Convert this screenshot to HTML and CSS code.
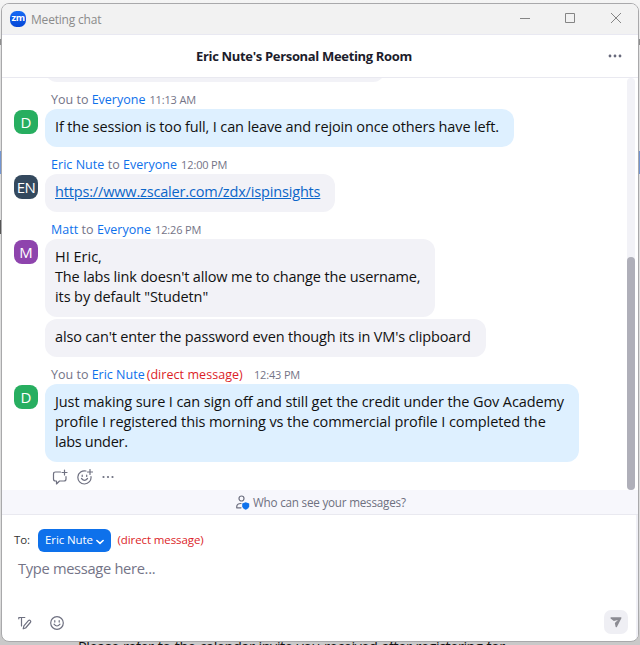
FILE: index.html
```
<!DOCTYPE html>
<html lang="en">
<head>
<meta charset="utf-8">
<title>Meeting chat</title>
<link rel="stylesheet" href="styles.css">
</head>
<body>
<div class="backdrop"><span>Please refer to the calendar invite you received after registering for</span></div>
<main class="window">
  <header class="titlebar">
    <span class="logo">zm</span>
    <span class="app-title">Meeting chat</span>
    <svg class="controls" width="104" height="12" viewBox="0 0 104 12"><path d="M0 6.500h10M45.500 1.500h9v9h-9zM91 1l10 10M101 1l-10 10"/></svg>
  </header>
  <div class="room"><h1>Eric Nute's Personal Meeting Room</h1>
    <svg class="more" width="14" height="4" viewBox="0 0 14 4"><circle cx="2" cy="2" r="1.400"/><circle cx="7" cy="2" r="1.400"/><circle cx="12" cy="2" r="1.400"/></svg>
  </div>
  <section class="messages">
    <div class="list">
      <div class="bubble previous"></div>
      <div class="meta"><span>You to <b>Everyone</b></span><time>11:13 AM</time></div>
      <article class="row"><span class="avatar green">D</span><p class="bubble own"><span class="snug">If the session is too full, I can leave and rejoin once others have left.</span></p></article>
      <div class="meta"><span class="roomy"><b>Eric Nute</b> to <b>Everyone</b></span><time class="near">12:00 PM</time></div>
      <article class="row"><span class="avatar navy">EN</span><p class="bubble"><a class="tight">https://www.zscaler.com/zdx/ispinsights</a></p></article>
      <div class="meta"><span class="roomy"><b>Matt</b> to <b>Everyone</b></span><time class="near">12:26 PM</time></div>
      <article class="row"><span class="avatar purple">M</span><div class="stack">
        <p class="bubble">HI Eric,<br><span class="tight">The labs link doesn't allow me to change the username,</span><br><span class="loose">its by default "Studetn"</span></p>
        <p class="bubble"><span class="tight">also can't enter the password even though its in VM's clipboard</span></p></div></article>
      <div class="meta"><span>You to <b>Eric Nute</b></span><span class="direct">(direct message)</span><time class="late">12:43 PM</time></div>
      <article class="row"><span class="avatar green">D</span><p class="bubble own"><span class="loose">Just making sure I can sign off and still get the credit under the Gov Academy</span><br><span class="loosest">profile I registered this morning vs the commercial profile I completed the</span><br><span class="tightest">labs under.</span></p></article>
      <div class="actions">
        <svg width="16" height="16" viewBox="0 0 16 16"><path d="M8.500 3H3.500Q1.500 3 1.500 5v5Q1.500 12 3.500 12h1v3l3-3h4.500q2 0 2-2V7.500M12.500 1v5M10 3.500h5"/></svg>
        <svg width="16" height="16" viewBox="0 0 16 16"><path d="M9 2A6.600 6.600 0 1 0 14 7.500M13 .500v5M10.500 3h5M4.500 9.500q3 3.600 6 0"/><path d="M5.200 6v1.500M9.700 6v1.500"/></svg>
        <svg class="dots" width="12" height="4" viewBox="0 0 12 4"><circle cx="1.500" cy="2" r="1.100"/><circle cx="6" cy="2" r="1.100"/><circle cx="10.500" cy="2" r="1.100"/></svg>
      </div>
    </div>
    <div class="track"><div class="thumb"></div></div>
  </section>
  <div class="notice">
    <svg width="14" height="15" viewBox="0 0 14 15"><circle cx="5.500" cy="3.500" r="2.500"/><path d="M5 8.500Q.7 8.500 .7 12v.8h4.300"/><path class="shield" d="M9.700 7.200l3.500 1.300v2.700q0 2-3.500 3.600-3.500-1.600-3.500-3.600V8.500z"/></svg>
    <span>Who can see your messages?</span>
  </div>
  <section class="compose">
    <div class="to"><span class="to-label">To:</span><span class="chip"><span>Eric Nute</span><svg width="8" height="6" viewBox="0 0 8 6"><path d="M.9 1.500L4 4.300 7.100 1.500"/></svg></span><span class="direct">(direct message)</span></div>
    <div class="input">Type message here...</div>
    <div class="tools">
      <svg width="14" height="14" viewBox="0 0 14 14"><path d="M.8 2.800V1.500h6M3.500 1.500v8.500M5.200 12.800l.7-3 4.500-5.200q1-.9 1.900 0t0 1.900l-4.700 5.500z"/></svg>
      <svg class="smile" width="14" height="14" viewBox="0 0 14 14"><circle cx="7" cy="7" r="6.300"/><path d="M4 8.200q3 3.600 6 0"/><path d="M4.800 4.700v1.400M9.200 4.700v1.400"/></svg>
      <span class="send"><svg width="12" height="12" viewBox="0 0 12 12"><path d="M1 1.200h9.800q1 0 .6 1L7 10.800q-.8 1-1.400 0L4.800 7 8 4 3.800 5 .6 2.600q-.6-1.200.4-1.400z"/></svg></span>
    </div>
  </section>
</main>
</body>
</html>
```
FILE: styles.css
```
* { box-sizing: border-box; }
body {
  margin: 0; height: 645px; overflow: hidden; position: relative; padding: 3px 0 0 1px;
  background:
    linear-gradient(#8e8e8e, #8e8e8e) 0 39px / 100% 6px no-repeat,
    linear-gradient(#7295d2, #7295d2) 0 151px / 100% 23px no-repeat,
    linear-gradient(#555, #555) 0 220px / 2px 14px no-repeat,
    linear-gradient(#f5f5f5 0, #dedede 60px, #dedede 600px, #c9c9c9 642px);
  font-family: "Open Sans", "Noto Sans", sans-serif; color: #111;
}
h1, p { margin: 0; }
b { font-weight: 400; color: #0e71eb; }
svg { display: block; flex: none; fill: none; stroke: #6e7080; stroke-width: 1.2; stroke-linecap: round; stroke-linejoin: round; }
.backdrop { position: absolute; left: 78px; top: 637px; font-size: 14.500px; letter-spacing: -.47px; word-spacing: .8px; line-height: 20px; white-space: nowrap; }
.window { position: relative; width: 638px; height: 639px; border: 1px solid #a9a9ab; border-radius: 8px; background: #fff; overflow: hidden; display: flex; flex-direction: column; }
.titlebar { height: 31px; flex: none; background: #f2f2f2; border-bottom: 1px solid #e9e9f2; display: flex; align-items: center; padding: 0 14px 0 8px; }
.logo { width: 16px; height: 16px; border-radius: 6.500px; background: linear-gradient(#166bf5, #0546d6); color: #fff; font-weight: 700; font-size: 9.500px; line-height: 14px; text-align: center; letter-spacing: -.6px; margin-top: -1px; }
.app-title { font-size: 12px; letter-spacing: -.2px; color: #8b8b8b; margin: 0 0 0 5px; }
.controls { margin-left: auto; margin-top: -2px; stroke: #858585; stroke-width: 1; stroke-linecap: butt; }
.room { height: 43px; flex: none; border-bottom: 1px solid #e9e9f0; display: flex; align-items: center; padding-left: 194px; padding-right: 16px; }
.room h1 { font-size: 13px; letter-spacing: -.33px; font-weight: 700; color: #1c1c2b; white-space: nowrap; }
.more { margin-left: auto; fill: #686a7c; stroke: none; }
.messages { height: 412px; flex: none; display: flex; overflow: hidden; }
.list { flex: 1; padding-left: 12px; }
.bubble { background: #f2f2f7; border-radius: 12px; padding: 8px 15px 10px 10px; font-size: 14.500px; line-height: 20px; white-space: nowrap; width: fit-content; }
.own { background: #def0ff; }
.snug { letter-spacing: -.145px; }
.tight { letter-spacing: -.16px; }
.loose { letter-spacing: -.1px; }
.loosest { letter-spacing: -.09px; }
.tightest { letter-spacing: -.28px; }
.previous { width: 340px; height: 24px; padding: 0; margin: -20px 0 0 31px; }
.meta { height: 27px; padding: 8px 0 0 37px; font-size: 12.500px; line-height: 19px; color: #747487; white-space: nowrap; display: flex; }
.roomy { letter-spacing: .04px; }
.meta time { font-size: 11px; letter-spacing: -.15px; margin-left: 4px; line-height: 20px; }
.meta .late { margin-left: 11px; }
.meta .direct { letter-spacing: .06px; }
.row { display: flex; gap: 7px; align-items: flex-start; }
.stack { display: flex; flex-direction: column; gap: 2px; }
.avatar { width: 24px; height: 24px; margin-top: 1px; border-radius: 8px; color: #fff; font-size: 15px; line-height: 24px; text-align: center; flex: none; }
.green { background: #27ae60; }
.navy { background: #34495e; letter-spacing: -.5px; }
.purple { background: #8e44ad; }
a { color: #0b66c9; text-decoration: underline; }
.direct { color: #dc1e28; margin-left: 2px; }
.actions { display: flex; align-items: center; gap: 8.500px; padding: 7px 0 0 38px; }
.actions .dots { fill: #6e7080; stroke: none; margin-left: 1px; }
.track { width: 8px; background: #f2f2f7; border-radius: 4px; margin-right: 3px; padding-top: 179px; }
.thumb { height: 233px; border-radius: 4px; background: #afafb9; }
.notice { height: 25px; flex: none; background: #f7f7fc; border-bottom: 1px solid #e9e9f0; display: flex; align-items: center; padding-left: 234px; gap: 3px; font-size: 11.700px; letter-spacing: -.22px; color: #6e7080; white-space: nowrap; }
.notice .shield { fill: #0e71eb; stroke: none; }
.compose { flex: 1; padding: 14px 12px 7px; display: flex; flex-direction: column; border-right: 2px solid #f0f0f6; }
.to { display: flex; align-items: center; height: 23px; font-size: 11.500px; line-height: 16px; letter-spacing: -.1px; white-space: nowrap; color: #333; }
.to > .to-label, .to > .direct, .chip > span { position: relative; top: -1px; }
.to-label { width: 24px; }
.chip { width: 73px; height: 23px; border-radius: 6px; background: #0e71eb; color: #fff; display: flex; align-items: center; padding-left: 7px; gap: 3px; }
.chip svg { stroke: #fff; stroke-width: 1.600; margin-top: 3px; }
.to .direct { margin-left: 6.500px; }
.input { font-size: 14.700px; letter-spacing: -.32px; line-height: 20px; color: #747487; padding: 6px 0 0 4px; }
.tools { display: flex; align-items: center; margin-top: auto; padding: 0 0 0 4px; height: 24px; }
.tools > svg { margin-top: 2px; }
.tools > .smile { margin-left: 18px; }
.send { width: 24px; height: 24px; border-radius: 7px; background: #efeff4; margin-left: auto; margin-right: -4px; display: grid; place-items: center; }
.send svg { fill: #8c8c93; stroke: none; }
```
